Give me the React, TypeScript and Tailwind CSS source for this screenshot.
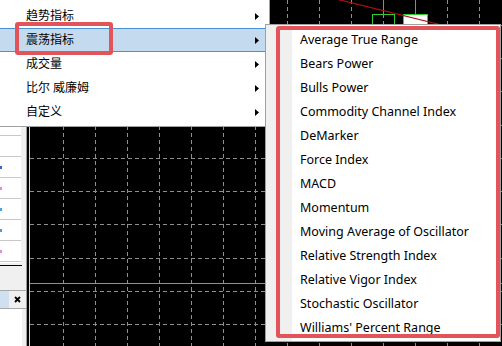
import React from 'react';

const font = { fontFamily: '"Noto Sans", "Noto Sans CJK SC", sans-serif' };

const mainItems = ['趋势指标', '震荡指标', '成交量', '比尔 威廉姆', '自定义'];

const oscillators = [
  'Average True Range',
  'Bears Power',
  'Bulls Power',
  'Commodity Channel Index',
  'DeMarker',
  'Force Index',
  'MACD',
  'Momentum',
  'Moving Average of Oscillator',
  'Relative Strength Index',
  'Relative Vigor Index',
  'Stochastic Oscillator',
  "Williams' Percent Range",
];

// marks on the navigator rows, by row index
const marks: Record<number, string> = {
  7: 'bg-[#3a66c8]',
  8: 'bg-[#e58ad8]',
  9: 'bg-[#3fa8e6]',
  10: 'bg-[#5a96d8]',
  11: 'bg-[#e58ad8]',
};

function Arrow() {
  return (
    <svg width="4" height="7" viewBox="0 0 4 7" className="ml-auto mr-[10px]">
      <polygon points="0,0 4,3.5 0,7" fill="#000" />
    </svg>
  );
}

function Chart() {
  const vx = Array.from({ length: 14 }, (_, i) => 33 + i * 32);
  const hy = Array.from({ length: 10 }, (_, i) => 24.7 + i * 33.3);
  return (
    <svg width="472" height="346" className="block">
      <rect width="472" height="346" fill="#000" />
      {vx.map((x) => (
        <line key={'v' + x} x1={x + 0.5} y1={0} x2={x + 0.5} y2={346} stroke="#8e8e8e" strokeDasharray="4 3" />
      ))}
      {hy.map((y) => (
        <line key={'h' + y} x1={0} y1={Math.round(y) + 0.5} x2={472} y2={Math.round(y) + 0.5} stroke="#8e8e8e" strokeDasharray="4 3" />
      ))}
      <line x1={0} y1={283.5} x2={472} y2={283.5} stroke="#8793a0" />
      {/* candles */}
      <line x1={353.5} y1={0} x2={353.5} y2={14} stroke="#2ecc2e" />
      <rect x={342.5} y={14.5} width={22} height={40} fill="none" stroke="#2ecc2e" />
      <line x1={385.5} y1={0} x2={385.5} y2={14} stroke="#2ecc2e" />
      <rect x={373.5} y={14.5} width={24} height={30} fill="#fff" stroke="#2ecc2e" />
      <line x1={300} y1={-2.5} x2={440} y2={32} stroke="#b01010" strokeWidth="1.2" />
    </svg>
  );
}

export default function App() {
  return (
    <div className="relative w-[502px] h-[346px] overflow-hidden flex bg-black text-black" style={font}>
      {/* navigator panel */}
      <div className="w-[26px] h-full flex flex-col bg-[#f0f0f0]">
        <div className="w-[21px] h-[263px] bg-white flex flex-col pt-[10px]">
          {Array.from({ length: 12 }, (_, i) => (
            <div key={i} className="h-[21px] shrink-0 border-b border-[#c8c8c8] flex items-center">
              {marks[i] && <div className={`w-[2px] h-[3px] ${marks[i]}`} />}
            </div>
          ))}
        </div>
        <div className="mt-[2px] w-[22px] h-px bg-black" />
        <div className="h-[24px]" />
        <div className="h-[19px] border-y border-[#a8a8a8] flex items-center">
          <div className="w-[9px] h-full bg-[#cfe0f0]" />
          <svg width="7" height="7" viewBox="0 0 7 7" className="ml-[5px]">
            <path d="M1 1 L6 6 M6 1 L1 6" stroke="#000" strokeWidth="1.8" />
          </svg>
        </div>
        <div className="flex-1 w-[22px] bg-white" />
      </div>

      {/* chart frame */}
      <div className="w-px h-full bg-[#9a9a9a]" />
      <div className="w-[2px] h-full bg-black" />
      <div className="w-px h-full bg-[#d4d4d4]" />
      <div className="flex-1 h-full">
        <Chart />
      </div>

      {/* main context menu */}
      <div className="absolute left-0 top-0 w-[270px] h-[127px] bg-white border-r border-b border-[#a0a0a0] pt-[4px] text-[12px]">
        {mainItems.map((label, i) => (
          <div
            key={label}
            className={
              'h-[24px] flex items-center pl-[26px] ' +
              (i === 1 ? 'bg-[#c4daee] border-y border-[#4a90d4]' : '')
            }
          >
            <span className="whitespace-pre">{label}</span>
            <Arrow />
          </div>
        ))}
      </div>

      {/* oscillators submenu */}
      <div className="absolute left-[265px] top-[24px] w-[236px] h-[318px] bg-white border border-[#a0a0a0] flex">
        <div className="w-[26px] h-full bg-[#f0f0f0]" />
        <div className="flex-1 pt-[3px] text-[12.5px]">
          {oscillators.map((label) => (
            <div key={label} className="h-[24px] flex items-center pl-[8px] whitespace-nowrap">
              {label}
            </div>
          ))}
        </div>
      </div>

      {/* annotation boxes */}
      <div className="absolute left-[15px] top-[22px] w-[98px] h-[33px] border-4 border-[#e3535a] rounded-[3px]" />
      <div className="absolute left-[276px] top-[26px] w-[224px] h-[312px] border-4 border-[#e3535a] rounded-[3px]" />
    </div>
  );
}
